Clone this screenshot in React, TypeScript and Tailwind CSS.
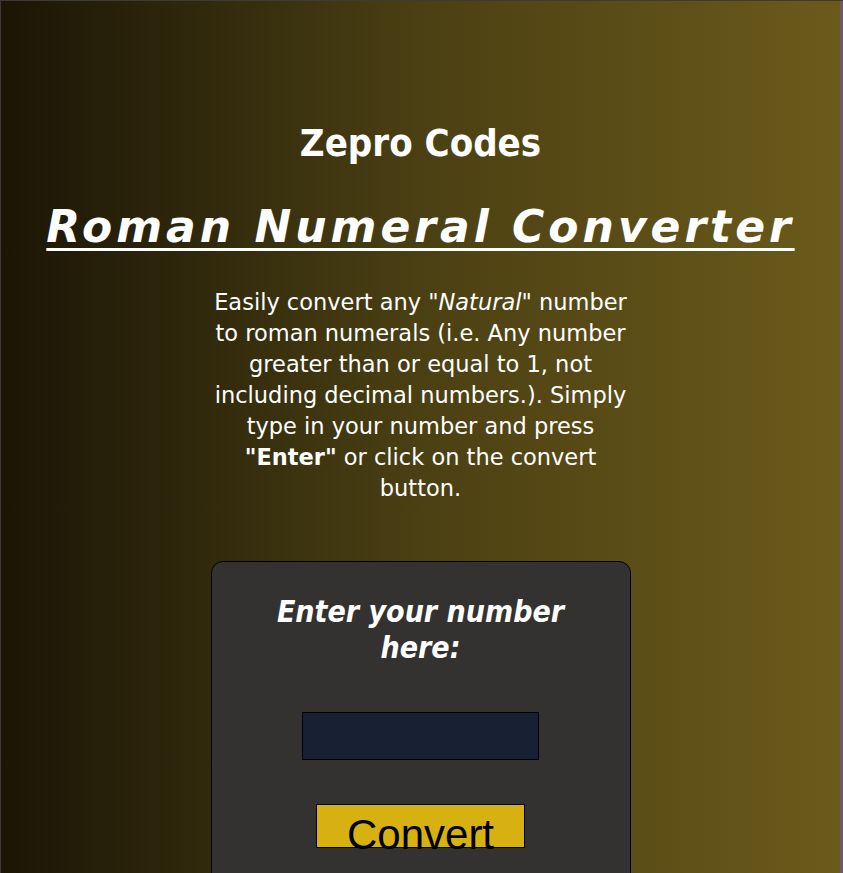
export default function App() {
  return (
    <div className="flex h-[873px] w-full overflow-hidden border-t border-[#3b3b3b]">
      <div className="flex flex-1 flex-col items-center border-l border-[#3b3b3b] bg-linear-to-r from-[#1b1506] via-[#4b4013] to-[#6b5a1a] font-['DejaVu_Sans'] text-white">
        <h1 className="mt-[120px] text-[38px] leading-[44px] font-bold font-stretch-condensed">Zepro Codes</h1>

        <h2 className="mt-[36px] text-[44px] leading-[52px] font-bold italic tracking-[4px] underline decoration-[3px] underline-offset-[6px]">
          Roman Numeral Converter
        </h2>

        <p className="mt-[34px] w-[426px] text-center text-[22.5px] leading-[31px]">
          Easily convert any <i>"Natural"</i> number to roman numerals (i.e. Any number greater than or equal to 1, not
          including decimal numbers.). Simply type in your number and press <b>"Enter"</b> or click on the convert
          button.
        </p>

        <div className="mt-[57px] flex w-[420px] flex-col items-center rounded-[12px] border border-black bg-[#343231] px-10 pt-[32px] pb-16">
          <h3 className="w-[320px] text-center text-[30px] leading-[36px] font-bold italic font-stretch-condensed">
            Enter your number here:
          </h3>
          <input
            type="text"
            className="mt-[46px] h-[48px] w-[237px] border border-black bg-[#172133] px-2 text-white outline-none"
          />
          <button className="mt-[44px] h-[44px] w-[209px] border border-black bg-[#d6b111] pt-[8px] font-['Liberation_Sans'] text-[42px] leading-[44px] text-black">
            Convert
          </button>
        </div>
      </div>
      <div className="w-[3px] bg-[#6b5a6b]" />
    </div>
  );
}
